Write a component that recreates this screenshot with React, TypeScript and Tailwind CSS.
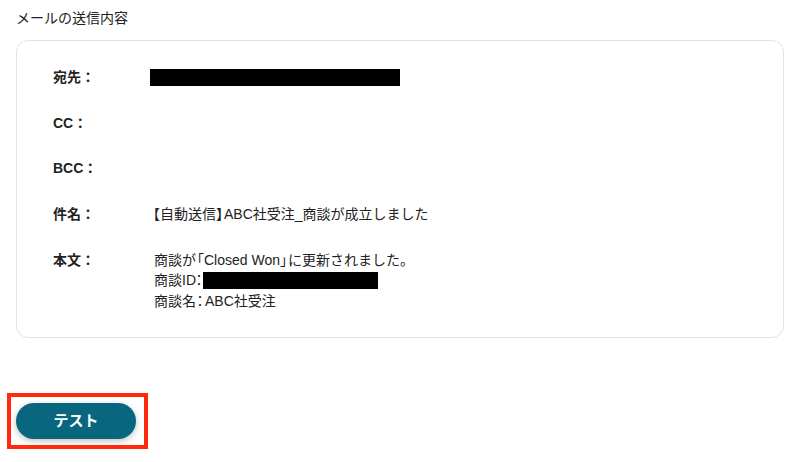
import React from "react";

const font = { fontFamily: '"Liberation Sans", "Noto Sans CJK JP", "Noto Sans", sans-serif' };

function Row({ label, children }: { label: string; children?: React.ReactNode }) {
  return (
    <div className="flex">
      <div className="w-[93px] shrink-0 font-bold text-[14px] leading-[20px] text-[#222]">{label}</div>
      <div className="text-[14px] leading-[20.5px] text-[#222]">{children}</div>
    </div>
  );
}

export default function App() {
  return (
    <div className="w-[799px] h-[462px] bg-white relative overflow-hidden" style={font}>
      <div className="pt-[8px] px-[16px]">
        <div className="text-[14px] leading-[20px] text-[#222]">メールの送信内容</div>
        <div className="mt-[12px] w-[768px] h-[298px] border border-[#e3e3e3] rounded-[12px] pl-[36px] pt-[26px]">
          <div className="flex flex-col gap-[25.5px]">
            <Row label="宛先：">
              <div className="ml-[4px] mt-[2px] w-[250px] h-[17px] bg-black" />
            </Row>
            <Row label="CC：" />
            <Row label="BCC：" />
            <Row label="件名：">
              【自動送信<span className="tracking-[-6px]">】</span>ABC社受注_商談が成立しました
            </Row>
            <Row label="本文：">
              <div className="pl-[8px]">
                <div>
                  商談<span className="tracking-[-6px]">が</span>「Closed Won<span className="tracking-[-6px]">」</span>に更新されました。
                </div>
                <div className="flex items-center">
                  <span>
                    商談I<span className="tracking-[-4px]">D</span>
                    <span className="tracking-[-3px]">：</span>
                  </span>
                  <span className="inline-block w-[175px] h-[17px] bg-black" />
                </div>
                <div>
                  商談<span className="tracking-[-3px]">名</span>
                  <span className="tracking-[-2px]">：</span>ABC社受注
                </div>
              </div>
            </Row>
          </div>
        </div>
        <div className="mt-[65px] relative w-[120px]">
          <button className="w-[120px] h-[36px] rounded-full bg-[#08677f] text-white font-bold text-[15px] shadow-[0_2px_6px_rgba(0,0,0,0.25)]">
            テスト
          </button>
          <div className="absolute left-[-9px] top-[-10px] w-[141px] h-[56px] border-4 border-[#ff2a0c]" />
        </div>
      </div>
    </div>
  );
}
